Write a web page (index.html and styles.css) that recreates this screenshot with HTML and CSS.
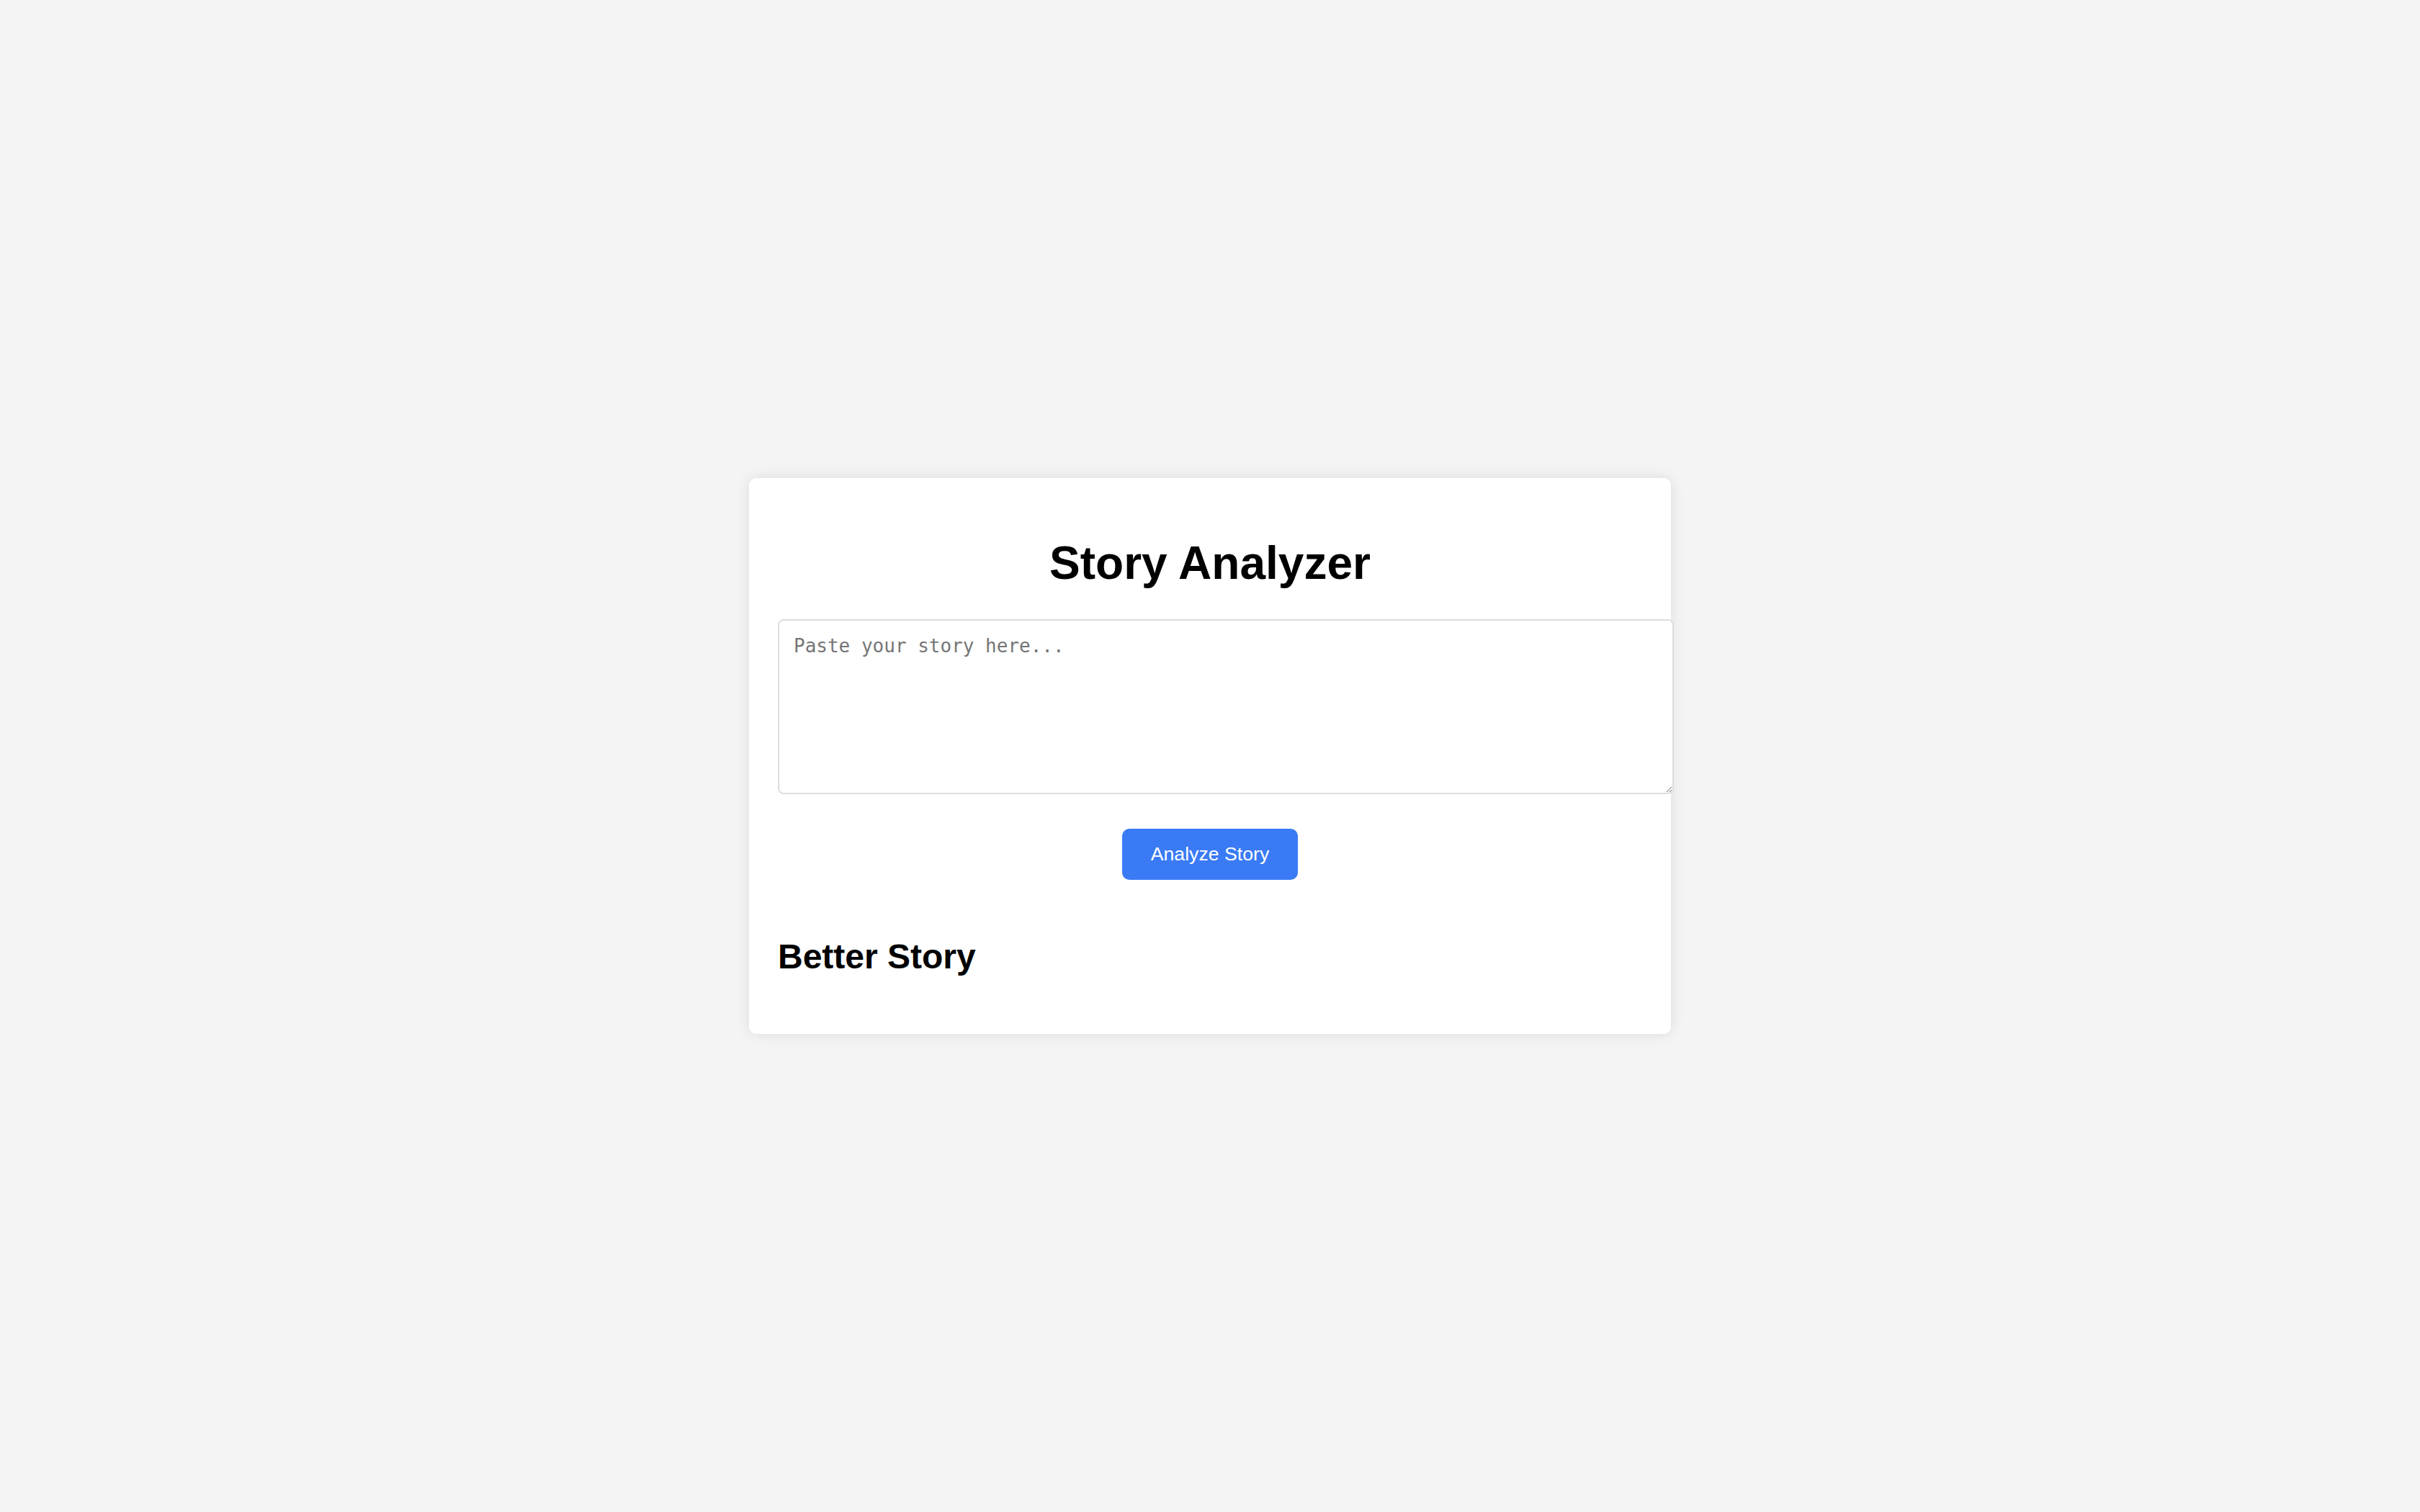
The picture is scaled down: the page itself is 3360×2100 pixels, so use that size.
FILE: index.html
```html
<!DOCTYPE html>
<html lang="en">
<head>
<meta charset="utf-8">
<title>Story Analyzer</title>
<link rel="stylesheet" href="styles.css">
</head>
<body>
  <main class="card">
    <h1 class="title">Story Analyzer</h1>
    <textarea class="story-input" placeholder="Paste your story here..."></textarea>
    <div class="actions">
      <button class="analyze-btn" type="button">Analyze Story</button>
    </div>
    <section class="result">
      <h2 class="result-title">Better Story</h2>
    </section>
  </main>
</body>
</html>
```

FILE: styles.css
```css
html, body {
  margin: 0;
  padding: 0;
}

body {
  background: #f4f4f4;
  font-family: "Liberation Sans", Arial, sans-serif;
  min-height: 100vh;
  display: flex;
  align-items: center;
  justify-content: center;
}

.card {
  width: 1200px;
  padding: 40px;
  background: #ffffff;
  border-radius: 10px;
  box-shadow: 0 0 20px rgba(0, 0, 0, 0.1);
}

.title {
  margin: 41px 0 41px;
  font-size: 64px;
  font-weight: bold;
  text-align: center;
  color: #000;
  line-height: 74px;
}

.story-input {
  display: block;
  box-sizing: border-box;
  width: 1244px;
  height: 243px;
  margin: 0;
  padding: 20px;
  border: 2px solid #dddddd;
  border-radius: 8px;
  font-family: "DejaVu Sans Mono", "Liberation Mono", monospace;
  font-size: 26px;
  line-height: 31px;
  color: #333;
  background: #fff;
  resize: vertical;
}

.story-input::placeholder {
  color: #757575;
}

.actions {
  display: flex;
  justify-content: center;
  margin-top: 48px;
}

.analyze-btn {
  padding: 20px 40px;
  border: none;
  border-radius: 10px;
  background: #3a7bf5;
  color: #ffffff;
  font-family: "Liberation Sans", Arial, sans-serif;
  font-size: 26.67px;
  line-height: 31px;
  cursor: pointer;
}

.result {
  margin-top: 79px;
}

.result-title {
  margin: 0 0 40px;
  font-size: 48px;
  font-weight: bold;
  line-height: 55px;
  color: #000;
}
```
